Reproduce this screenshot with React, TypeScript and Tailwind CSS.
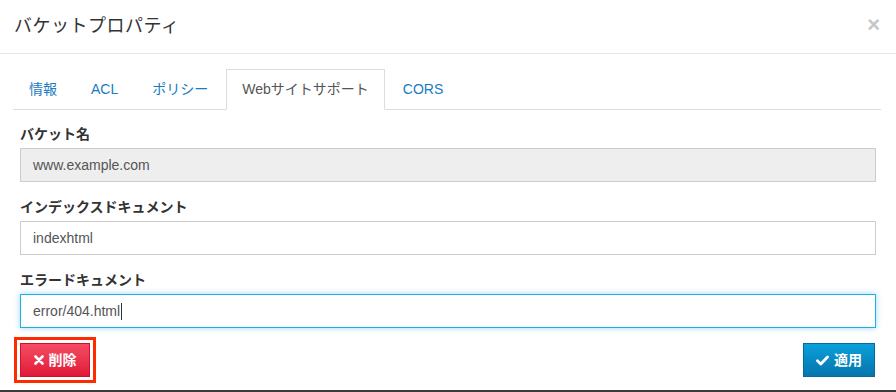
import React from 'react';

const font = { fontFamily: '"Liberation Sans", "Noto Sans CJK JP", sans-serif' };

const tabs = ['情報', 'ACL', 'ポリシー', 'Webサイトサポート', 'CORS'];
const active = 3;

export default function App() {
  return (
    <div style={font} className="w-[896px] h-[392px] bg-white border-b-2 border-[#3a3a3a] flex flex-col text-[#333]">
      {/* header */}
      <div className="h-[54px] flex items-center justify-between pl-[14px] pr-[16px] border-b border-[#e5e5e5]">
        <h1 className="text-[18px] tracking-[0.5px] text-[#333] font-normal">バケットプロパティ</h1>
        <span className="text-[22px] font-bold text-[#c6c6c6] leading-none -mt-[4px]">×</span>
      </div>

      {/* tabs */}
      <div className="mt-[15px] ml-[13px] mr-[15px] flex border-b border-[#dddddd] h-[41px]">
        {tabs.map((t, i) => (
          <div
            key={t}
            className={
              i === active
                ? 'mr-[2px] px-[15px] h-[41px] flex items-center border border-[#dddddd] border-b-white bg-white text-[14px] text-[#555]'
                : 'mr-[2px] px-[15px] h-[40px] flex items-center border border-transparent text-[14px] text-[#1a7bbf]'
            }
          >
            {t}
          </div>
        ))}
      </div>

      {/* form */}
      <div className="px-[20px] pt-[15px] flex flex-col">
        <label className="text-[14px] font-bold text-[#333] leading-[18px]">バケット名</label>
        <div className="mt-[5px] h-[34px] border border-[#cccccc] bg-[#eeeeee] flex items-center px-[12px] text-[14px] text-[#555] w-[856px]">
          www.example.com
        </div>

        <label className="mt-[16px] text-[14px] font-bold text-[#333] leading-[18px]">インデックスドキュメント</label>
        <div className="mt-[5px] h-[34px] border border-[#cccccc] bg-white flex items-center px-[12px] text-[14px] text-[#555] w-[856px]">
          indexhtml
        </div>

        <label className="mt-[16px] text-[14px] font-bold text-[#333] leading-[18px]">エラードキュメント</label>
        <div className="mt-[5px] h-[34px] border border-[#1eaee8] bg-white flex items-center px-[12px] text-[14px] text-[#555] w-[856px] shadow-[0_0_6px_rgba(30,174,232,0.45)]">
          error/404.html
          <span className="ml-[1px] w-px h-[17px] bg-[#333]" />
        </div>

        {/* footer buttons */}
        <div className="mt-[15px] flex justify-between w-[855px]">
          <button className="h-[34px] w-[70px] flex items-center justify-center gap-[5px] text-white text-[14px] font-bold border border-[#d0112f] bg-gradient-to-b from-[#f64a63] to-[#df1538] outline-[3px] outline-solid outline-[#ff2a00] outline-offset-[3px]">
            <svg width="10" height="10" viewBox="0 0 10 10">
              <path d="M1.5 1.5 L8.5 8.5 M8.5 1.5 L1.5 8.5" stroke="white" strokeWidth="2.6" strokeLinecap="round" />
            </svg>
            削除
          </button>
          <button className="h-[34px] w-[72px] flex items-center justify-center gap-[5px] text-white text-[14px] font-bold border border-[#06699d] bg-gradient-to-b from-[#0aa0da] to-[#0674ad]">
            <svg width="13" height="11" viewBox="0 0 13 11">
              <path d="M1.5 5.8 L4.8 9 L11.5 2" fill="none" stroke="white" strokeWidth="2.8" strokeLinecap="round" strokeLinejoin="round" />
            </svg>
            適用
          </button>
        </div>
      </div>
    </div>
  );
}
